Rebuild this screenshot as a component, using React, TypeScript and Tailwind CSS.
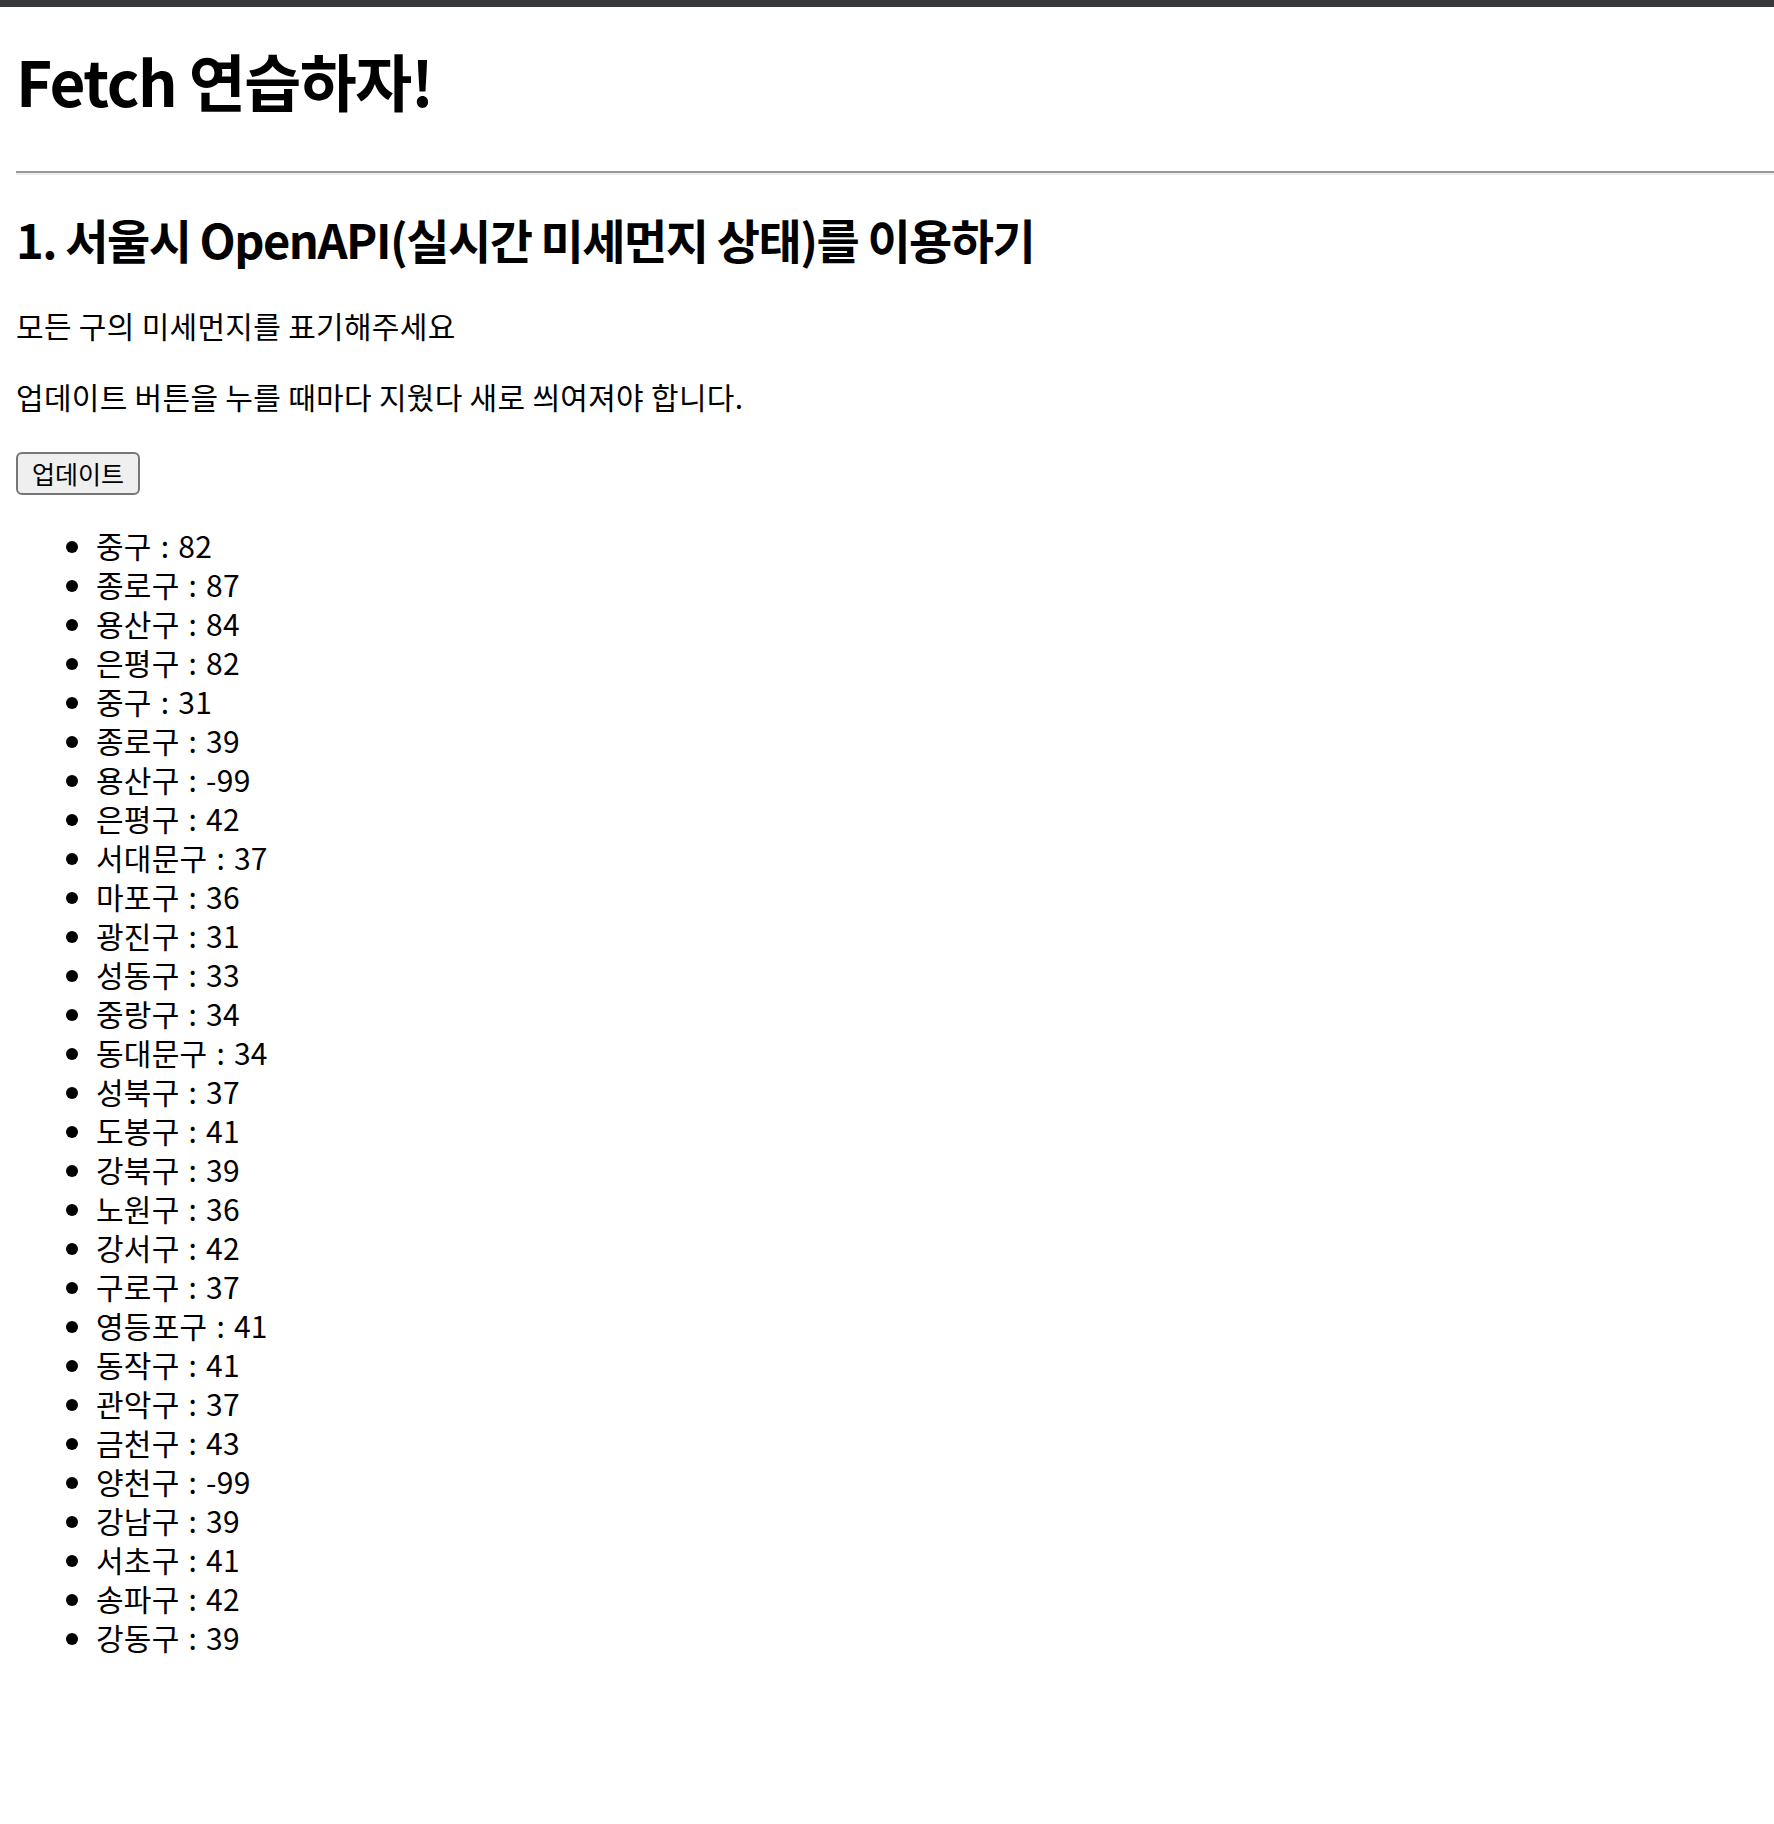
const dustList = [
  { gu: '중구', value: 82 },
  { gu: '종로구', value: 87 },
  { gu: '용산구', value: 84 },
  { gu: '은평구', value: 82 },
  { gu: '중구', value: 31 },
  { gu: '종로구', value: 39 },
  { gu: '용산구', value: -99 },
  { gu: '은평구', value: 42 },
  { gu: '서대문구', value: 37 },
  { gu: '마포구', value: 36 },
  { gu: '광진구', value: 31 },
  { gu: '성동구', value: 33 },
  { gu: '중랑구', value: 34 },
  { gu: '동대문구', value: 34 },
  { gu: '성북구', value: 37 },
  { gu: '도봉구', value: 41 },
  { gu: '강북구', value: 39 },
  { gu: '노원구', value: 36 },
  { gu: '강서구', value: 42 },
  { gu: '구로구', value: 37 },
  { gu: '영등포구', value: 41 },
  { gu: '동작구', value: 41 },
  { gu: '관악구', value: 37 },
  { gu: '금천구', value: 43 },
  { gu: '양천구', value: -99 },
  { gu: '강남구', value: 39 },
  { gu: '서초구', value: 41 },
  { gu: '송파구', value: 42 },
  { gu: '강동구', value: 39 },
];

export default function App() {
  return (
    <div className="min-h-screen bg-white text-black font-['Noto_Sans_CJK_KR','Noto_Sans',sans-serif]">
      <div className="h-[7px] bg-[#38393d]" />

      <div className="pl-4 pb-16">
        <h1 className="mt-[37px] text-[62px] leading-[72px] font-bold tracking-[-1.5px]">Fetch 연습하자!</h1>

        <hr className="mt-[55px] border-t-2 border-b-2 border-t-[#9a9a9a] border-b-[#eeeeee]" />

        <h2 className="mt-[36px] text-[47px] leading-[56px] font-bold tracking-[-1.5px]">
          1. 서울시 OpenAPI(실시간 미세먼지 상태)를 이용하기
        </h2>

        <p className="mt-[39px] text-[30px] leading-[39px] tracking-[0.3px]">모든 구의 미세먼지를 표기해주세요</p>
        <p className="mt-[32px] text-[30px] leading-[39px] tracking-[0.3px]">
          업데이트 버튼을 누를 때마다 지웠다 새로 씌여져야 합니다.
        </p>

        <div className="mt-[36px]">
          <button className="w-[124px] h-[43px] flex items-center justify-center rounded-[6px] border-2 border-[#767676] bg-[#efefef] text-[25px] leading-none text-black">
            업데이트
          </button>
        </div>

        <ul className="mt-[31px] pl-[80px] list-disc text-[30px] leading-[39px] tracking-[0.25px] [word-spacing:2px]">
          {dustList.map((item, i) => (
            <li key={i}>
              {item.gu} : {item.value}
            </li>
          ))}
        </ul>
      </div>
    </div>
  );
}
